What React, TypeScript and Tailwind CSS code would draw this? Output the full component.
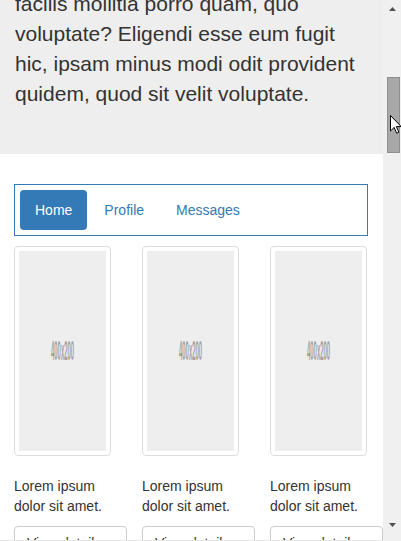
import React from "react";

const font = { fontFamily: '"Liberation Sans", Arial, sans-serif' };

function Thumb() {
  return (
    <div className="flex w-[97px] shrink-0 flex-col">
      <div className="h-[210px] w-[97px] rounded-[4px] border border-[#dddddd] bg-white p-[4px]">
        <div className="flex h-[200px] w-[87px] items-center justify-center overflow-hidden bg-[#eeeeee]">
          <span className="inline-block scale-x-[0.22] whitespace-nowrap text-[27px] font-bold leading-[20px] text-[#a3a3a3]">
            400x200
          </span>
        </div>
      </div>
      <p className="mt-[20px] text-[14px] leading-[20px] text-[#333333]">
        <span className="block whitespace-nowrap">Lorem ipsum</span>
        <span className="block whitespace-nowrap">dolor sit amet.</span>
      </p>
      <div className="mt-[10px] w-[113px] shrink-0 whitespace-nowrap rounded-[4px] border border-[#cccccc] bg-white px-[12px] py-[6px] text-[14px] leading-[20px] text-[#333333]">
        View details »
      </div>
    </div>
  );
}

export default function App() {
  return (
    <div className="relative flex h-[541px] w-[401px] overflow-hidden bg-white" style={font}>
      <div className="relative h-[541px] w-[383px] shrink-0 overflow-hidden">
        <div className="-mt-[11px] flex flex-col">
          <div className="bg-[#eeeeee] px-[15px] pb-[45px] text-[21px] leading-[30px] text-[#333333]">
            <span className="block whitespace-nowrap">facilis mollitia porro quam, quo</span>
            <span className="block whitespace-nowrap">voluptate? Eligendi esse eum fugit</span>
            <span className="block whitespace-nowrap">hic, ipsam minus modi odit provident</span>
            <span className="block whitespace-nowrap">quidem, quod sit velit voluptate.</span>
          </div>
          <div className="ml-[14px] mt-[30px] flex h-[52px] w-[354px] gap-[2px] border border-[#337ab7] p-[5px] text-[14px] leading-[20px]">
            <div className="rounded-[4px] bg-[#337ab7] px-[15px] py-[10px] text-white">Home</div>
            <div className="px-[15px] py-[10px] text-[#337ab7]">Profile</div>
            <div className="px-[15px] py-[10px] text-[#337ab7]">Messages</div>
          </div>
          <div className="ml-[14px] mt-[10px] flex gap-[31px]">
            <Thumb />
            <Thumb />
            <Thumb />
          </div>
        </div>
      </div>
      <div className="relative flex h-[541px] w-[18px] shrink-0 flex-col items-center bg-[#f0f0f0]">
        <svg width="9" height="17" viewBox="0 0 9 17" className="mt-[0px]">
          <polygon points="1,11 8,11 4.5,7" fill="#505050" />
        </svg>
        <div className="ml-[2px] mt-[60px] h-[76px] w-[13px] border border-[#8f8f8f] bg-[#a8a8a8]" />
        <div className="flex-1" />
        <svg width="9" height="17" viewBox="0 0 9 17" className="mb-[6px]">
          <polygon points="1,5 8,5 4.5,9" fill="#505050" />
        </svg>
      </div>
      <div className="absolute bottom-0 left-0 h-[1px] w-[383px] bg-[#e6e6e6]" />
      <svg className="absolute left-[390px] top-[115px]" width="12" height="20" viewBox="0 0 12 20">
        <path
          d="M0.5 0.5 L0.5 16 L4.2 12.4 L6.6 18.2 L8.8 17.2 L6.4 11.6 L11.2 11.6 Z"
          fill="#ffffff"
          stroke="#000000"
          strokeWidth="1"
          strokeLinejoin="miter"
        />
      </svg>
    </div>
  );
}
